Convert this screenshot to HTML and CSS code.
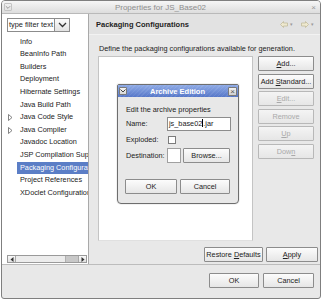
FILE: index.html
```html
<!DOCTYPE html>
<html lang="en">
<head>
  <meta charset="UTF-8">
  <title>Properties for JS_Base02</title>
  <link rel="stylesheet" href="styles.css">
</head>
<body>
  <div class="window">
    <div class="titlebar">
      <span class="win-menu"><svg width="7" height="5" viewBox="0 0 7 5"><path d="M1 1 L3.5 3.5 L6 1" fill="none" stroke="#8a8a8a" stroke-width="1"/></svg></span>
      <span class="title">Properties for JS_Base02</span>
      <span class="win-close">&times;</span>
    </div>

    <div class="main">
      <!-- Left: page tree -->
      <aside class="sidebar">
        <div class="filter">
          <div class="filter-text">type filter text</div>
          <div class="filter-drop"><svg width="9" height="6" viewBox="0 0 9 6"><path d="M1 1 L4.5 4.5 L8 1" fill="none" stroke="#333" stroke-width="1.3"/></svg></div>
        </div>
        <ul class="tree">
          <li><span class="twisty"></span><span class="label">Info</span></li>
          <li><span class="twisty"></span><span class="label">BeanInfo Path</span></li>
          <li><span class="twisty"></span><span class="label">Builders</span></li>
          <li><span class="twisty"></span><span class="label">Deployment</span></li>
          <li><span class="twisty"></span><span class="label">Hibernate Settings</span></li>
          <li><span class="twisty"></span><span class="label">Java Build Path</span></li>
          <li><span class="twisty"><svg width="5" height="7" viewBox="0 0 5 7"><path d="M0.5 0.5 L4 3.5 L0.5 6.5 Z" fill="none" stroke="#666" stroke-width="0.8"/></svg></span><span class="label">Java Code Style</span></li>
          <li><span class="twisty"><svg width="5" height="7" viewBox="0 0 5 7"><path d="M0.5 0.5 L4 3.5 L0.5 6.5 Z" fill="none" stroke="#666" stroke-width="0.8"/></svg></span><span class="label">Java Compiler</span></li>
          <li><span class="twisty"></span><span class="label">Javadoc Location</span></li>
          <li><span class="twisty"></span><span class="label">JSP Compilation Support</span></li>
          <li class="selected"><span class="twisty"></span><span class="label">Packaging Configurations</span></li>
          <li><span class="twisty"></span><span class="label">Project References</span></li>
          <li><span class="twisty"></span><span class="label">XDoclet Configurations</span></li>
        </ul>
        <div class="hscroll">
          <span class="arrow"><svg width="4" height="5" viewBox="0 0 4 5"><path d="M3.5 0 L0.5 2.5 L3.5 5 Z" fill="#333"/></svg></span>
          <span class="track"></span>
          <span class="thumb"></span>
          <span class="arrow"><svg width="4" height="5" viewBox="0 0 4 5"><path d="M0.5 0 L3.5 2.5 L0.5 5 Z" fill="#333"/></svg></span>
        </div>
      </aside>

      <!-- Right: property page -->
      <section class="page">
        <div class="page-head">
          <h1>Packaging Configurations</h1>
          <div class="nav">
            <svg width="8" height="7" viewBox="0 0 8 7"><path d="M0.5 3.5 L3.5 0.5 L3.5 2 L7.5 2 L7.5 5 L3.5 5 L3.5 6.5 Z" fill="#efe9cf" stroke="#c2bb9c" stroke-width="0.8"/></svg>
            <span class="caret">&#9662;</span>
            <svg width="8" height="7" viewBox="0 0 8 7"><path d="M7.5 3.5 L4.5 0.5 L4.5 2 L0.5 2 L0.5 5 L4.5 5 L4.5 6.5 Z" fill="#efe9cf" stroke="#c2bb9c" stroke-width="0.8"/></svg>
            <span class="caret">&#9662;</span>
          </div>
        </div>
        <p class="desc">Define the packaging configurations available for generation.</p>
        <div class="list-area">
          <div class="list"></div>
          <div class="side-buttons">
            <button class="btn"><u>A</u>dd...</button>
            <button class="btn">Add <u>S</u>tandard...</button>
            <button class="btn" disabled><u>E</u>dit...</button>
            <button class="btn" disabled>Remove</button>
            <button class="btn" disabled><u>U</u>p</button>
            <button class="btn" disabled>Dow<u>n</u></button>
          </div>
        </div>
        <div class="page-buttons">
          <button class="btn restore">Restore <u>D</u>efaults</button>
          <button class="btn apply"><u>A</u>pply</button>
        </div>
      </section>
    </div>

    <div class="footer">
      <button class="btn ok">OK</button>
      <button class="btn cancel">Cancel</button>
    </div>

    <!-- Archive Edition dialog over the page -->
    <div class="dialog">
      <div class="dlg-title">
        <span class="dlg-menu"><svg width="6" height="4" viewBox="0 0 6 4"><path d="M0.5 0.5 L3 3 L5.5 0.5" fill="none" stroke="#444" stroke-width="1"/></svg></span>
        <span class="dlg-caption">Archive Edition</span>
        <span class="dlg-close">&times;</span>
      </div>
      <div class="dlg-body">
        <p class="dlg-intro">Edit the archive properties</p>
        <div class="dlg-row">
          <span class="dlg-label">Name:</span>
          <div class="text-field">js_base02<span class="caret-mark"></span>.jar</div>
        </div>
        <div class="dlg-row">
          <span class="dlg-label">Exploded:</span>
          <span class="checkbox"></span>
        </div>
        <div class="dlg-row">
          <span class="dlg-label">Destination:</span>
          <div class="dest-field"></div>
          <button class="btn browse">Browse...</button>
        </div>
        <div class="dlg-buttons">
          <button class="btn dlg-ok">OK</button>
          <button class="btn dlg-cancel">Cancel</button>
        </div>
      </div>
    </div>
  </div>
</body>
</html>
```

FILE: styles.css
```css
/* Reset */
* {
  box-sizing: border-box;
  margin: 0;
  padding: 0;
}
body {
  background: #fff;
  font-family: 'Liberation Sans', Arial, sans-serif;
}
ul {
  list-style: none;
}

/* Window frame */
.window {
  position: relative;
  margin-left: 1px;
  width: 320px;
  height: 299px;
  border: 1px solid #7f7f7f;
  border-radius: 4px 4px 3px 3px;
  background: #e8e8e8;
  display: flex;
  flex-direction: column;
  overflow: hidden;
  font-size: 7.3px;
  color: #222;
}
.titlebar {
  height: 13px;
  flex: none;
  display: flex;
  align-items: center;
  padding: 0 2px 0 2px;
  background: linear-gradient(#f6f6f6, #dddddd);
  border-bottom: 1px solid #b9b9b9;
  color: #8e8e8e;
  font-size: 8px;
}
.win-menu {
  width: 8px;
  height: 8px;
  display: flex;
  align-items: center;
  justify-content: center;
  border: 1px solid #c4c4c4;
  border-radius: 1px;
}
.title {
  flex: 1;
  text-align: center;
}
.win-close {
  width: 9px;
  text-align: center;
  font-size: 8px;
  color: #9a9a9a;
}

/* Main split */
.main {
  height: 250px;
  flex: none;
  display: flex;
}

/* Sidebar tree */
.sidebar {
  width: 87px;
  flex: none;
  background: #fff;
  border-right: 1px solid #a9a9a9;
  display: flex;
  flex-direction: column;
  padding: 4px 0 1px 0;
}
.filter {
  display: flex;
  margin-left: 5px;
  height: 14px;
}
.filter-text {
  width: 48px;
  border: 1px solid #8c8c8c;
  background: #fff;
  padding-left: 1px;
  line-height: 12px;
  font-size: 7.4px;
  white-space: nowrap;
  overflow: hidden;
}
.filter-drop {
  width: 15px;
  border: 1px solid #8c8c8c;
  border-left: none;
  background: linear-gradient(#fbfbfb, #e2e2e2);
  display: flex;
  align-items: center;
  justify-content: center;
}
.tree {
  flex: 1;
  margin-top: 3.7px;
}
.tree li {
  display: flex;
  height: 12.6px;
  line-height: 12.6px;
  white-space: nowrap;
  overflow: hidden;
}
.twisty {
  width: 15px;
  flex: none;
  padding-left: 6px;
  display: flex;
  align-items: center;
}
.label {
  flex: 1;
  padding-left: 3px;
  overflow: hidden;
}
.tree li.selected .label {
  background: #5b7ec6;
  color: #fff;
}
.hscroll {
  display: flex;
  height: 8px;
  margin-left: 5px;
  width: 80px;
  border: 1px solid #9a9a9a;
  background: #e4e4e4;
}
.hscroll .arrow {
  width: 8px;
  display: flex;
  align-items: center;
  justify-content: center;
  background: linear-gradient(#fafafa, #e0e0e0);
}
.hscroll .arrow:first-child {
  border-right: 1px solid #a8a8a8;
}
.hscroll .arrow:last-child {
  border-left: 1px solid #a8a8a8;
}
.hscroll .track {
  flex: 1;
  background: #ececec;
}
.hscroll .thumb {
  width: 13px;
  background: #c8c8c8;
  border-left: 1px solid #b0b0b0;
}

/* Property page */
.page {
  flex: 1;
  display: flex;
  flex-direction: column;
}
.page-head {
  height: 21px;
  flex: none;
  display: flex;
  align-items: center;
  padding: 0 6px 0 7px;
  background: #e2e2e2;
  border-bottom: 1px solid #f2f2f2;
}
.page-head h1 {
  flex: 1;
  font-size: 7.5px;
  font-weight: bold;
}
.nav {
  display: flex;
  align-items: center;
  gap: 2px;
}
.nav .caret {
  font-size: 5px;
  color: #9a9a9a;
  margin-right: 6px;
}
.nav .caret:last-child {
  margin-right: 0;
}
.desc {
  margin: 9px 0 0 10px;
  line-height: 9px;
  white-space: nowrap;
}
.list-area {
  display: flex;
  gap: 5px;
  margin: 3px 0 0 9px;
  height: 185px;
}
.list {
  width: 155px;
  background: #fff;
  border: 1px solid #c4c4c4;
  border-bottom-color: #e0e0e0;
}
.side-buttons {
  width: 56px;
  display: flex;
  flex-direction: column;
  gap: 2.6px;
}

/* Buttons */
.btn {
  height: 15px;
  border: 1px solid #8c8c8c;
  border-radius: 1px;
  background: linear-gradient(#fcfcfc, #e6e6e6);
  font-family: inherit;
  font-size: 7.3px;
  color: #222;
  text-align: center;
  line-height: 13px;
}
.btn:disabled {
  color: #a9a9a9;
  border-color: #b8b8b8;
  background: linear-gradient(#f4f4f4, #e6e6e6);
}
.page-buttons {
  display: flex;
  justify-content: flex-end;
  gap: 3px;
  margin: 6px 2px 0 0;
}
.restore {
  width: 59px;
}
.apply {
  width: 52px;
}

/* Footer */
.footer {
  flex: 1;
  border-top: 1px solid #bcbcbc;
  display: flex;
  justify-content: flex-end;
  align-items: flex-start;
  gap: 4px;
  padding: 8px 6px 0 0;
}
.ok {
  width: 50px;
}
.cancel {
  width: 51px;
}

/* Archive Edition dialog */
.dialog {
  position: absolute;
  left: 115px;
  top: 83px;
  width: 122px;
  height: 120px;
  border: 1px solid #6e6e6e;
  border-radius: 2px 2px 4px 4px;
  background: #e8e8e8;
  box-shadow: 0 0 0 1px rgba(0, 0, 0, 0.05);
}
.dlg-title {
  height: 12px;
  display: flex;
  align-items: center;
  padding: 0 1px;
  background: repeating-linear-gradient(135deg, rgba(255, 255, 255, 0.08) 0 1px, rgba(255, 255, 255, 0) 1px 3px),
    linear-gradient(#8fabe6, #5677c8);
  color: #fff;
}
.dlg-menu {
  width: 8px;
  height: 8px;
  display: flex;
  align-items: center;
  justify-content: center;
  background: linear-gradient(#f4f4f4, #d8d8d8);
  border: 1px solid #7a7a7a;
  border-radius: 1px;
}
.dlg-caption {
  flex: 1;
  text-align: center;
  font-size: 7.5px;
  font-weight: bold;
}
.dlg-close {
  width: 9px;
  height: 9px;
  line-height: 7px;
  text-align: center;
  font-size: 8px;
  color: #555;
  background: linear-gradient(#f2f2f2, #d0d0d0);
  border: 1px solid #7a7a7a;
  border-radius: 1px;
}
.dlg-body {
  padding: 8px 0 0 8px;
}
.dlg-intro {
  line-height: 9px;
}
.dlg-row {
  display: flex;
  align-items: center;
  height: 15px;
  margin-top: 1px;
}
.dlg-row:nth-child(2) {
  margin-top: 2px;
}
.dlg-label {
  width: 41px;
  flex: none;
}
.text-field {
  width: 64px;
  height: 14px;
  border: 1px solid #8c8c8c;
  background: #fff;
  padding-left: 1px;
  line-height: 12px;
  white-space: nowrap;
}
.caret-mark {
  display: inline-block;
  width: 1px;
  height: 8px;
  background: #000;
  vertical-align: -1px;
}
.checkbox {
  width: 8px;
  height: 8px;
  margin-left: 1px;
  border: 1px solid #7c7c7c;
  background: #fff;
}
.dest-field {
  width: 14px;
  height: 15px;
  border: 1px solid #a0a0a0;
  background: #fff;
}
.browse {
  width: 47px;
  margin-left: 2px;
}
.dlg-buttons {
  display: flex;
  gap: 3px;
  margin: 16px 0 0 -1px;
}
.dlg-ok {
  width: 52px;
}
.dlg-cancel {
  width: 50px;
}
```
